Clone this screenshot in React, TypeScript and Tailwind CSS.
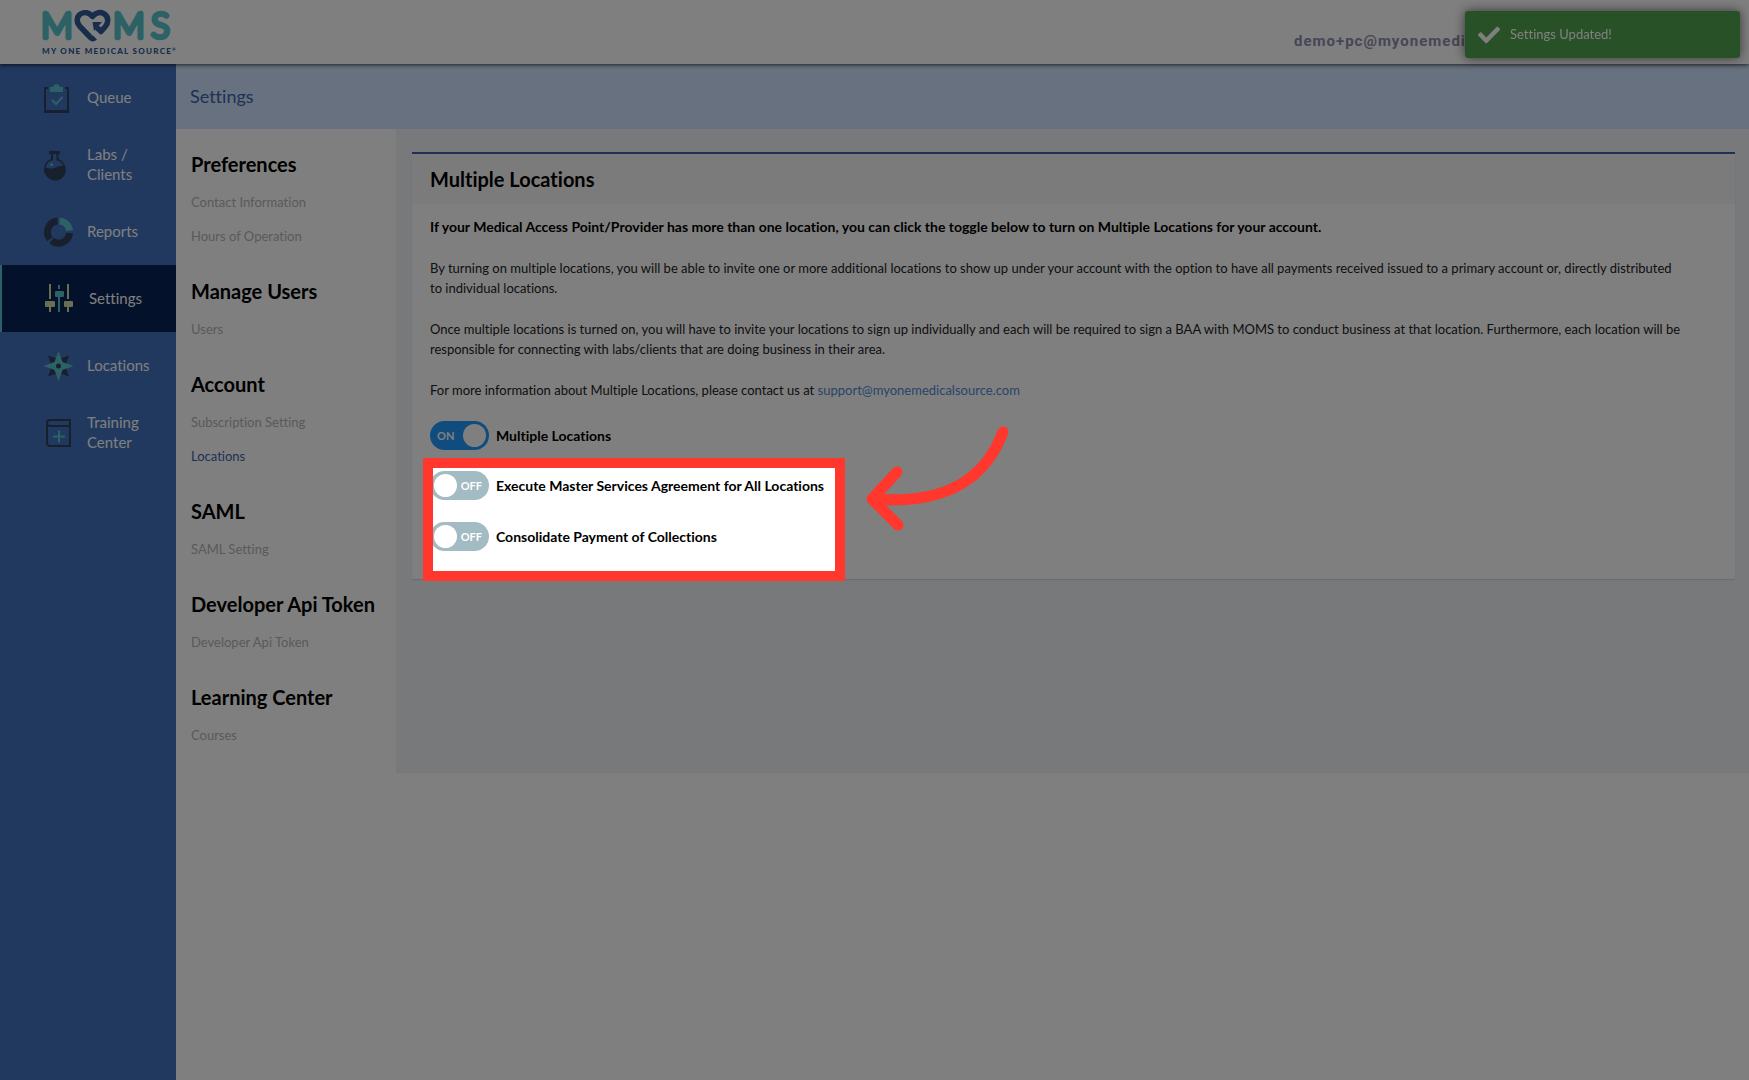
import clsx from 'clsx'
import { ReactElement, ReactNode, useState } from 'react'
import { FaCheck } from 'react-icons/fa'

const TEAL = '#58c4cc'
const SLATE = '#30405c'
const SAND = '#d5dca4'
const NAVY = '#2e5a94'
const RED = '#ff372c'

const Icon = ({ children }: { children: ReactNode }): ReactElement => (
  <svg
    viewBox="0 0 30 30"
    className="size-[30px] shrink-0 overflow-visible"
    fill="none"
    aria-hidden="true"
  >
    {children}
  </svg>
)

const QueueIcon = (): ReactElement => (
  <Icon>
    <path d="M4 5H1v24h23V5h-3" stroke={SLATE} strokeWidth="2" />
    <path d="M0 28.500h25" stroke={SLATE} strokeWidth="3" />
    <path d="M6 9V4h3a3.600 3.600 0 0 1 7 0h3v5z" fill={TEAL} />
    <path d="M8 17l4 4 6.500-7" stroke={TEAL} strokeWidth="2" />
  </Icon>
)

const LabsIcon = (): ReactElement => (
  <Icon>
    <path d="M5 1h11v3H5z" fill={SLATE} />
    <path d="M8 3v7.500M13.500 3v7.500" stroke={SLATE} strokeWidth="2" />
    <path
      d="M8 9.500a10 10 0 1 0 5.500 0"
      stroke={SLATE}
      strokeWidth="1.500"
    />
    <path
      d="M1 18c4-.5 5 1.500 9 0s6-3 11-2a10.500 10.500 0 1 1-20 2z"
      fill={SLATE}
    />
    <circle cx="7.500" cy="14.500" r="1.500" fill={TEAL} />
  </Icon>
)

const ReportsIcon = (): ReactElement => (
  <Icon>
    <path d="M15.500 4A11 11 0 0 1 25.500 13.500" stroke={TEAL} strokeWidth="7" />
    <path d="M25.500 16A11 11 0 0 1 7.500 23.500" stroke={SLATE} strokeWidth="7" />
    <path d="M6 22A11 11 0 0 1 13.500 4" stroke={SLATE} strokeWidth="7" />
  </Icon>
)

const SettingsIcon = (): ReactElement => (
  <Icon>
    <path d="M4 0v15M4 22v6M22 0v15M22 22v6" stroke={SAND} strokeWidth="2" />
    <path d="M13 1v4M13 12v16" stroke={TEAL} strokeWidth="2" />
    <rect x="-1" y="17" width="10" height="6" rx="1" fill={SAND} />
    <rect x="18" y="17" width="9" height="6" rx="1" fill={SAND} />
    <rect x="9" y="7" width="9" height="6" rx="1" fill={TEAL} />
  </Icon>
)

const LocationsIcon = (): ReactElement => (
  <Icon>
    <path
      d="M4 4.500l7 2.500h7l7-2.500-2.500 7v7l2.500 7-7-2.500h-7l-7 2.500 2.500-7v-7z"
      fill={SLATE}
    />
    <path d="M14.500 0l4 11 11 4-11 4-4 11-4-11-11-4 11-4z" fill={TEAL} />
    <circle cx="14.500" cy="15" r="2.500" fill={SLATE} />
  </Icon>
)

const TrainingIcon = (): ReactElement => (
  <Icon>
    <path
      d="M27 2H6a3 3 0 0 0-3 3v20a3 3 0 0 0 3 3h20V8H6a3 3 0 0 1-3-3M26 2.500V8"
      stroke={SLATE}
      strokeWidth="2"
    />
    <path d="M9 18.500h12M15 12.500v12" stroke={TEAL} strokeWidth="2" />
  </Icon>
)

const Logo = (): ReactElement => (
  <svg
    viewBox="36 2 146 60"
    className="h-[60px] w-[146px] overflow-visible"
    aria-label="MOMS"
  >
    <g
      fill={TEAL}
      stroke={TEAL}
      strokeWidth="4.500"
      strokeLinejoin="round"
      fontFamily="Lato, sans-serif"
      fontSize="35"
      fontWeight="300"
    >
      <text x="41" y="38">M</text>
      <text x="113" y="38">M</text>
      <text x="151" y="38">S</text>
    </g>
    <path
      d="M95 37.500c-1.500 1.500-3 1.500-4.500 0L80 26.500c-4-4-3.500-10 .5-12.500s8.500-1.500 12 2.500c3.500-4 8.500-5 12-2.500 4.500 3.500 4 9 .5 13L101 31.500l-4-4"
      fill="none"
      stroke={NAVY}
      strokeWidth="5.500"
      strokeLinejoin="round"
    />
    <path d="M92.500 22h9.500l-8 9z" fill={NAVY} />
    <text
      x="42"
      y="54"
      fill={NAVY}
      fontFamily="Lato, sans-serif"
      fontSize="8"
      fontWeight="900"
      letterSpacing="1.300"
    >
      MY ONE MEDICAL SOURCE
      <tspan fontSize="4" dy="-3">®</tspan>
    </text>
  </svg>
)

const navItems = [
  { label: 'Queue', icon: <QueueIcon /> },
  { label: 'Labs / Clients', icon: <LabsIcon /> },
  { label: 'Reports', icon: <ReportsIcon /> },
  { label: 'Settings', icon: <SettingsIcon />, active: true },
  { label: 'Locations', icon: <LocationsIcon /> },
  { label: 'Training Center', icon: <TrainingIcon /> },
]

const menuSections = [
  { title: 'Preferences', links: ['Contact Information', 'Hours of Operation'] },
  { title: 'Manage Users', links: ['Users'] },
  { title: 'Account', links: ['Subscription Setting', 'Locations'] },
  { title: 'SAML', links: ['SAML Setting'] },
  { title: 'Developer Api Token', links: ['Developer Api Token'] },
  { title: 'Learning Center', links: ['Courses'] },
]

const Sidebar = (): ReactElement => (
  <nav className="w-[176px] shrink-0 bg-[#4272be]">
    {navItems.map(({ label, icon, active }) => (
      <a
        key={label}
        href="#"
        className={clsx(
          'flex h-[67px] items-center gap-[13px] pr-6 pl-11 text-[15px] leading-5 text-white',
          active && 'border-l-2 border-[#58c4cc] bg-[#062254]',
        )}
      >
        {icon}
        <span className="pb-0.5">{label}</span>
      </a>
    ))}
  </nav>
)

const SettingsMenu = (): ReactElement => (
  <aside className="flex w-[220px] shrink-0 flex-col gap-[17px] bg-white pt-[14px] pb-[21px] pl-[15px]">
    {menuSections.map(({ title, links }) => (
      <section key={title}>
        <h2 className="text-[20px] leading-[42px] font-bold whitespace-nowrap text-black">
          {title}
        </h2>
        <ul>
          {links.map((link) => (
            <li key={link} className="text-[13px] leading-[34px]">
              <a
                href="#"
                className={link === 'Locations' ? 'text-[#3a64a6]' : 'text-[#b4b4b4]'}
              >
                {link}
              </a>
            </li>
          ))}
        </ul>
      </section>
    ))}
  </aside>
)

interface ToggleProps {
  label: string
  defaultOn?: boolean
}

const Toggle = ({ label, defaultOn = false }: ToggleProps): ReactElement => {
  const [on, setOn] = useState<boolean>(defaultOn)

  return (
    <label className="flex w-fit cursor-pointer items-center gap-[7px] text-[14px] font-bold text-black">
      <input
        type="checkbox"
        role="switch"
        className="sr-only"
        checked={on}
        onChange={() => setOn(!on)}
      />
      <span
        className={clsx(
          'flex h-[29px] w-[59px] items-center justify-between rounded-full text-[11px] text-white',
          on ? 'bg-[#2098fa] pr-[3px] pl-[7px]' : 'flex-row-reverse bg-[#a3bbc3] pr-[7px] pl-1',
        )}
      >
        <span>{on ? 'ON' : 'OFF'}</span>
        <span className="size-[23px] rounded-full bg-white" />
      </span>
      {label}
    </label>
  )
}

// Frames its parent and dims everything outside the frame
const Spotlight = (): ReactElement => (
  <>
    <div className="pointer-events-none absolute -top-[13px] -bottom-[30px] -left-[7px] z-50 w-[422px] border-[10px] border-[#ff372c] shadow-[0_0_0_9999px_rgba(0,0,0,0.5)]" />
    <svg
      viewBox="0 0 146 108"
      className="pointer-events-none absolute -top-[47px] left-[434px] z-50 h-[108px] w-[146px]"
      fill="none"
      stroke={RED}
      strokeWidth="11"
      strokeLinecap="round"
      strokeLinejoin="round"
      aria-hidden="true"
    >
      <path d="M139 8C121 56 81 81 8 75M33 48L8 75l26 26" />
    </svg>
  </>
)

const LocationsCard = (): ReactElement => (
  <section className="border-t-2 border-[#3a64a6] bg-white shadow-[0_1px_1px_rgba(0,0,0,0.1)]">
    <h1 className="bg-[#f7f7f7] px-[18px] text-[20px] leading-[50px] font-bold text-black">
      Multiple Locations
    </h1>
    <div className="flex flex-col gap-[21px] px-[18px] pt-[13px] pb-[28px] text-[13px] leading-5 text-[#222]">
      <p className="text-[14px] font-bold text-black">
        If your Medical Access Point/Provider has more than one location, you can
        click the toggle below to turn on Multiple Locations for your account.
      </p>
      <p>
        By turning on multiple locations, you will be able to invite one or more
        additional locations to show up under your account with the option to
        have all payments received issued to a primary account or, directly
        distributed
        <br />
        to individual locations.
      </p>
      <p>
        Once multiple locations is turned on, you will have to invite your
        locations to sign up individually and each will be required to sign a BAA
        with MOMS to conduct business at that location. Furthermore, each
        location will be
        <br />
        responsible for connecting with labs/clients that are doing business in
        their area.
      </p>
      <p>
        For more information about Multiple Locations, please contact us at{' '}
        <a href="mailto:support@myonemedicalsource.com" className="text-[#5088d4]">
          support@myonemedicalsource.com
        </a>
      </p>
      <Toggle label="Multiple Locations" defaultOn />
      <div className="relative flex flex-col gap-[22px]">
        <Toggle label="Execute Master Services Agreement for All Locations" />
        <Toggle label="Consolidate Payment of Collections" />
        <Spotlight />
      </div>
    </div>
  </section>
)

const Toast = (): ReactElement => (
  <div
    role="status"
    className="fixed top-[11px] right-[9px] z-20 flex h-[47px] w-[275px] items-center gap-[10px] rounded-[3px] bg-[#51a351] pl-[13px] text-[13px] text-white shadow-[0_0_12px_rgba(0,0,0,0.6)]"
  >
    <FaCheck className="size-[22px]" />
    <span>Settings Updated!</span>
  </div>
)

const App = (): ReactElement => (
  <div className="flex min-h-screen flex-col overflow-hidden bg-white font-['Lato',sans-serif] [font-variant-ligatures:none]">
    <header className="relative z-10 flex h-16 items-center justify-between bg-white pl-9 shadow-[0_1px_4px_rgba(0,0,0,0.7)]">
      <Logo />
      <div className="w-[455px] pt-[18px] font-['Roboto',sans-serif] text-[15px] leading-6 font-bold tracking-[1px] text-[#8c8cab]">
        demo+pc@myonemedi
      </div>
    </header>
    <div className="flex flex-1">
      <Sidebar />
      <div className="min-w-0 flex-1">
        <div className="bg-[#d0e2fe] px-[14px] text-[18px] leading-[65px] text-[#3a64a6]">
          Settings
        </div>
        <div className="flex bg-[#eef2f6]">
          <SettingsMenu />
          <main className="min-w-0 flex-1 pt-[23px] pr-[14px] pl-4">
            <LocationsCard />
          </main>
        </div>
      </div>
    </div>
    <Toast />
  </div>
)

export default App
